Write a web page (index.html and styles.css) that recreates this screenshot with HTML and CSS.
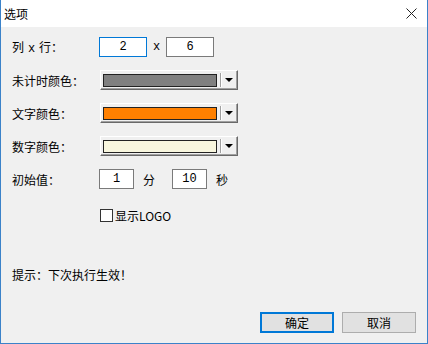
FILE: index.html
```html
<!DOCTYPE html>
<html lang="zh-CN">
<head>
    <meta charset="UTF-8">
    <title>选项</title>
    <link rel="stylesheet" href="styles.css">
</head>
<body>
    <div class="dialog">
        <!-- 标题栏 -->
        <div class="titlebar">
            <span class="title">选项</span>
            <svg class="close" width="11" height="11" viewBox="0 0 11 11">
                <path d="M0.5 0.5 L10.5 10.5 M10.5 0.5 L0.5 10.5" stroke="#222" stroke-width="1" fill="none"/>
            </svg>
        </div>

        <div class="content">
            <div class="row">
                <span class="label">列<span class="mid-x">x</span>行：</span>
                <div class="edit edit-wide focus">2</div>
                <span class="times">x</span>
                <div class="edit edit-wide">6</div>
            </div>

            <div class="row">
                <span class="label">未计时颜色：</span>
                <div class="combo">
                    <div class="swatch swatch-gray"></div>
                    <div class="drop"><span class="arrow"></span></div>
                </div>
            </div>

            <div class="row">
                <span class="label">文字颜色：</span>
                <div class="combo">
                    <div class="swatch swatch-orange"></div>
                    <div class="drop"><span class="arrow"></span></div>
                </div>
            </div>

            <div class="row">
                <span class="label">数字颜色：</span>
                <div class="combo">
                    <div class="swatch swatch-cream"></div>
                    <div class="drop"><span class="arrow"></span></div>
                </div>
            </div>

            <div class="row">
                <span class="label">初始值：</span>
                <div class="edit edit-small">1</div>
                <span class="unit unit-min">分</span>
                <div class="edit edit-small">10</div>
                <span class="unit">秒</span>
            </div>

            <label class="check-row">
                <span class="checkbox"></span>
                <span>显示LOGO</span>
            </label>

            <p class="hint">提示：下次执行生效！</p>

            <div class="buttons">
                <button class="btn btn-default">确定</button>
                <button class="btn">取消</button>
            </div>
        </div>
    </div>
</body>
</html>
```

FILE: styles.css
```css
/* 基本样式 */
body {
    margin: 0;
    padding: 0;
    font-family: "Noto Sans CJK SC", "Liberation Sans", sans-serif;
    font-size: 12px;
    color: #000;
}

.dialog {
    width: 428px;
    height: 344px;
    box-sizing: border-box;
    display: flex;
    flex-direction: column;
    background-color: #f0f0f0;
    border: 1px solid #3b82c9;
    border-top: none;
}

/* 标题栏 */
.titlebar {
    height: 27px;
    flex-shrink: 0;
    background-color: #fff;
    display: flex;
    align-items: center;
    justify-content: space-between;
    padding: 0 10px 0 3px;
}

.title {
    line-height: 14px;
}

.close {
    display: block;
}

/* 主内容 */
.content {
    flex: 1;
    display: flex;
    flex-direction: column;
    padding: 10px 0 10px 10px;
}

.row {
    display: flex;
    align-items: center;
    height: 20px;
    margin-bottom: 13px;
}

.label {
    width: 88px;
    box-sizing: border-box;
    flex-shrink: 0;
    padding-left: 1px;
}

.mid-x {
    display: inline-block;
    width: 15px;
    text-align: center;
    font-family: "Liberation Mono", monospace;
}

.edit {
    height: 20px;
    box-sizing: border-box;
    border: 1px solid #7a7a7a;
    background-color: #fff;
    text-align: center;
    line-height: 18px;
    font-family: "Liberation Mono", monospace;
    font-size: 12px;
}

.edit.focus {
    border-color: #0078d7;
}

.edit-wide {
    width: 48px;
}

.edit-small {
    width: 35px;
}

.times {
    width: 19px;
    text-align: center;
    font-family: "Liberation Mono", monospace;
}

.unit {
    padding-left: 9px;
}

.unit-min {
    width: 38px;
    box-sizing: border-box;
}

/* 颜色下拉框 */
.combo {
    margin-left: 1px;
    width: 138px;
    height: 20px;
    box-sizing: border-box;
    display: flex;
    align-items: stretch;
    border: 1px solid;
    border-color: #fff #696969 #696969 #fff;
    box-shadow: inset -1px -1px 0 #a0a0a0;
    background-color: #f0f0f0;
}

.swatch {
    flex: 1;
    margin: 3px 3px 2px 2px;
    border: 1px solid #222;
}

.swatch-gray {
    background-color: #808080;
}

.swatch-orange {
    background-color: #ff8000;
}

.swatch-cream {
    background-color: #f8f6de;
}

.drop {
    width: 15px;
    display: flex;
    align-items: center;
    justify-content: center;
    border-left: 1px solid #a0a0a0;
    box-shadow: inset 1px 0 0 #fff;
    margin: 2px 1px 2px 0;
}

.arrow {
    width: 0;
    height: 0;
    border-left: 4px solid transparent;
    border-right: 4px solid transparent;
    border-top: 4px solid #000;
}

/* 复选框 */
.check-row {
    display: flex;
    align-items: center;
    height: 13px;
    margin-top: 7px;
    padding-left: 89px;
}

.checkbox {
    width: 13px;
    height: 13px;
    box-sizing: border-box;
    border: 1px solid #333;
    background-color: #fff;
    margin-right: 2px;
}

.hint {
    margin: 46px 0 0 1px;
    line-height: 14px;
}

/* 按钮 */
.buttons {
    margin-top: auto;
    display: flex;
    justify-content: flex-end;
    gap: 8px;
    padding-right: 11px;
}

.btn {
    width: 74px;
    height: 21px;
    box-sizing: border-box;
    border: 1px solid #adadad;
    background-color: #e1e1e1;
    font-family: "Noto Sans CJK SC", sans-serif;
    font-size: 12px;
    padding: 0;
}

.btn-default {
    border: 2px solid #0078d7;
}
```
